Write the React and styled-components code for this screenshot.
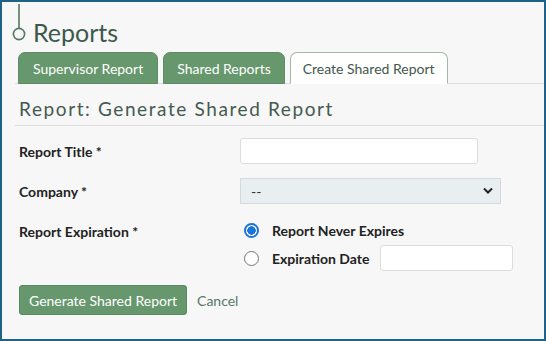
import React, { useState } from 'react'
import styled, { createGlobalStyle } from 'styled-components'

const GlobalStyle = createGlobalStyle`
  html, body {
    margin: 0;
    padding: 0;
    background: #f7f7f7;
  }
  * {
    box-sizing: border-box;
  }
`

const Frame = styled.div`
  width: 546px;
  height: 341px;
  border: 2px solid #1e6287;
  background: #f7f7f7;
  font-family: Lato, 'Liberation Sans', sans-serif;
  color: #222;
  overflow: hidden;
`

const TitleRow = styled.div`
  height: 50px;
  display: flex;
  align-items: flex-end;
  padding-left: 10px;
`

const TitleMark = styled.svg`
  width: 14px;
  height: 48px;
  flex: none;
`

const Title = styled.h1`
  margin: 0 0 5px 7px;
  font-size: 25px;
  font-weight: 400;
  color: #3b5a4c;
  line-height: 30px;
`

const TabBar = styled.div`
  display: flex;
  gap: 5px;
  margin-left: 13px;
  padding-left: 3px;
  border-bottom: 1px solid #dedede;
  height: 32px;
  align-items: flex-end;
`

const Tab = styled.button`
  margin: 0 0 -1px 0;
  height: 32px;
  padding: 0 ${(p) => p.$pad}px;
  border-radius: 7px 7px 0 0;
  font-family: inherit;
  font-size: 14px;
  cursor: pointer;
  border: 1px solid ${(p) => (p.$active ? '#9fb9a4' : '#5e8c65')};
  border-bottom: ${(p) => (p.$active ? '1px solid #fff' : '1px solid #5e8c65')};
  background: ${(p) => (p.$active ? '#fff' : '#67976d')};
  color: ${(p) => (p.$active ? '#44574c' : '#fff')};
`

const SectionHeading = styled.h2`
  margin: 0 0 0 13px;
  padding: 0 0 0 4px;
  height: 42px;
  line-height: 50px;
  font-size: 19px;
  font-weight: 400;
  letter-spacing: 1.6px;
  color: #455a4f;
  border-bottom: 1px solid #dedede;
`

const Form = styled.div`
  display: grid;
  grid-template-columns: 221px 1fr;
  padding: 5px 0 0 17px;
`

const Label = styled.div`
  display: flex;
  align-items: center;
  height: ${(p) => p.$h}px;
  font-size: 14px;
  font-weight: 700;
  color: #222;
`

const Field = styled.div`
  display: flex;
  flex-direction: column;
  justify-content: ${(p) => (p.$top ? 'flex-start' : 'center')};
  height: ${(p) => p.$h}px;
`

const TextInput = styled.input`
  width: ${(p) => p.$w}px;
  height: 26px;
  border: 1px solid #dcdcdc;
  border-radius: 3px;
  background: #fff;
  font-family: inherit;
  font-size: 14px;
  padding: 0 8px;
`

const SelectWrap = styled.div`
  position: relative;
  width: 261px;
  height: 26px;
`

const Select = styled.select`
  appearance: none;
  width: 100%;
  height: 100%;
  border: 1px solid #d3dbde;
  border-radius: 0;
  background: #e9eff1;
  font-family: inherit;
  font-size: 14px;
  color: #333;
  padding: 0 10px;
`

const Chevron = styled.svg`
  position: absolute;
  right: 8px;
  top: 9px;
  width: 10px;
  height: 8px;
  pointer-events: none;
`

const RadioRow = styled.label`
  display: flex;
  align-items: center;
  height: 28px;
  margin-top: ${(p) => p.$mt || 0}px;
  font-size: 14px;
  font-weight: 700;
  color: #222;
  cursor: pointer;
`

const RadioDot = styled.span`
  width: 15px;
  height: 15px;
  margin: 0 13px 0 4px;
  border-radius: 50%;
  flex: none;
  border: ${(p) => (p.$on ? '2px solid #1a73d9' : '1px solid #767676')};
  background: ${(p) => (p.$on ? 'radial-gradient(circle, #1a73d9 0 4px, #fff 4.5px)' : '#fff')};
`

const RadioText = styled.span`
  margin-right: 11px;
`

const Actions = styled.div`
  display: flex;
  align-items: center;
  gap: 10px;
  padding: 4px 0 0 17px;
`

const PrimaryButton = styled.button`
  margin: 0;
  height: 30px;
  padding: 0 9px;
  border: 1px solid #5b8a62;
  border-radius: 3px;
  background: #67976d;
  color: #fff;
  font-family: inherit;
  font-size: 14px;
  cursor: pointer;
`

const LinkButton = styled.a`
  font-size: 14px;
  color: #567868;
  text-decoration: none;
`

export default function App() {
  const [tab, setTab] = useState(2)
  const [never, setNever] = useState(true)
  const tabs = [
    { name: 'Supervisor Report', pad: 14 },
    { name: 'Shared Reports', pad: 13 },
    { name: 'Create Shared Report', pad: 12 }
  ]
  return (
    <>
      <GlobalStyle />
      <Frame>
        <TitleRow>
          <TitleMark viewBox="0 0 14 48">
            <line x1="7" y1="0" x2="7" y2="24" stroke="#4f7a5c" strokeWidth="1.6" />
            <circle cx="7" cy="30" r="5.6" fill="none" stroke="#4f7a5c" strokeWidth="1.6" />
          </TitleMark>
          <Title>Reports</Title>
        </TitleRow>
        <TabBar>
          {tabs.map((t, i) => (
            <Tab key={t.name} $pad={t.pad} $active={tab === i} onClick={() => setTab(i)}>
              {t.name}
            </Tab>
          ))}
        </TabBar>
        <SectionHeading>Report: Generate Shared Report</SectionHeading>
        <Form>
          <Label $h={40}>Report Title *</Label>
          <Field $h={40}>
            <TextInput $w={238} />
          </Field>
          <Label $h={40}>Company *</Label>
          <Field $h={40}>
            <SelectWrap>
              <Select>
                <option>--</option>
              </Select>
              <Chevron viewBox="0 0 10 8">
                <path d="M1 1.5 L5 5.5 L9 1.5" fill="none" stroke="#222" strokeWidth="2" />
              </Chevron>
            </SelectWrap>
          </Field>
          <Label $h={40}>Report Expiration *</Label>
          <Field $h={70} $top>
            <RadioRow $mt={5} onClick={() => setNever(true)}>
              <RadioDot $on={never} />
              <RadioText>Report Never Expires</RadioText>
            </RadioRow>
            <RadioRow onClick={() => setNever(false)}>
              <RadioDot $on={!never} />
              <RadioText>Expiration Date</RadioText>
              <TextInput $w={133} />
            </RadioRow>
          </Field>
        </Form>
        <Actions>
          <PrimaryButton>Generate Shared Report</PrimaryButton>
          <LinkButton href="#">Cancel</LinkButton>
        </Actions>
      </Frame>
    </>
  )
}
